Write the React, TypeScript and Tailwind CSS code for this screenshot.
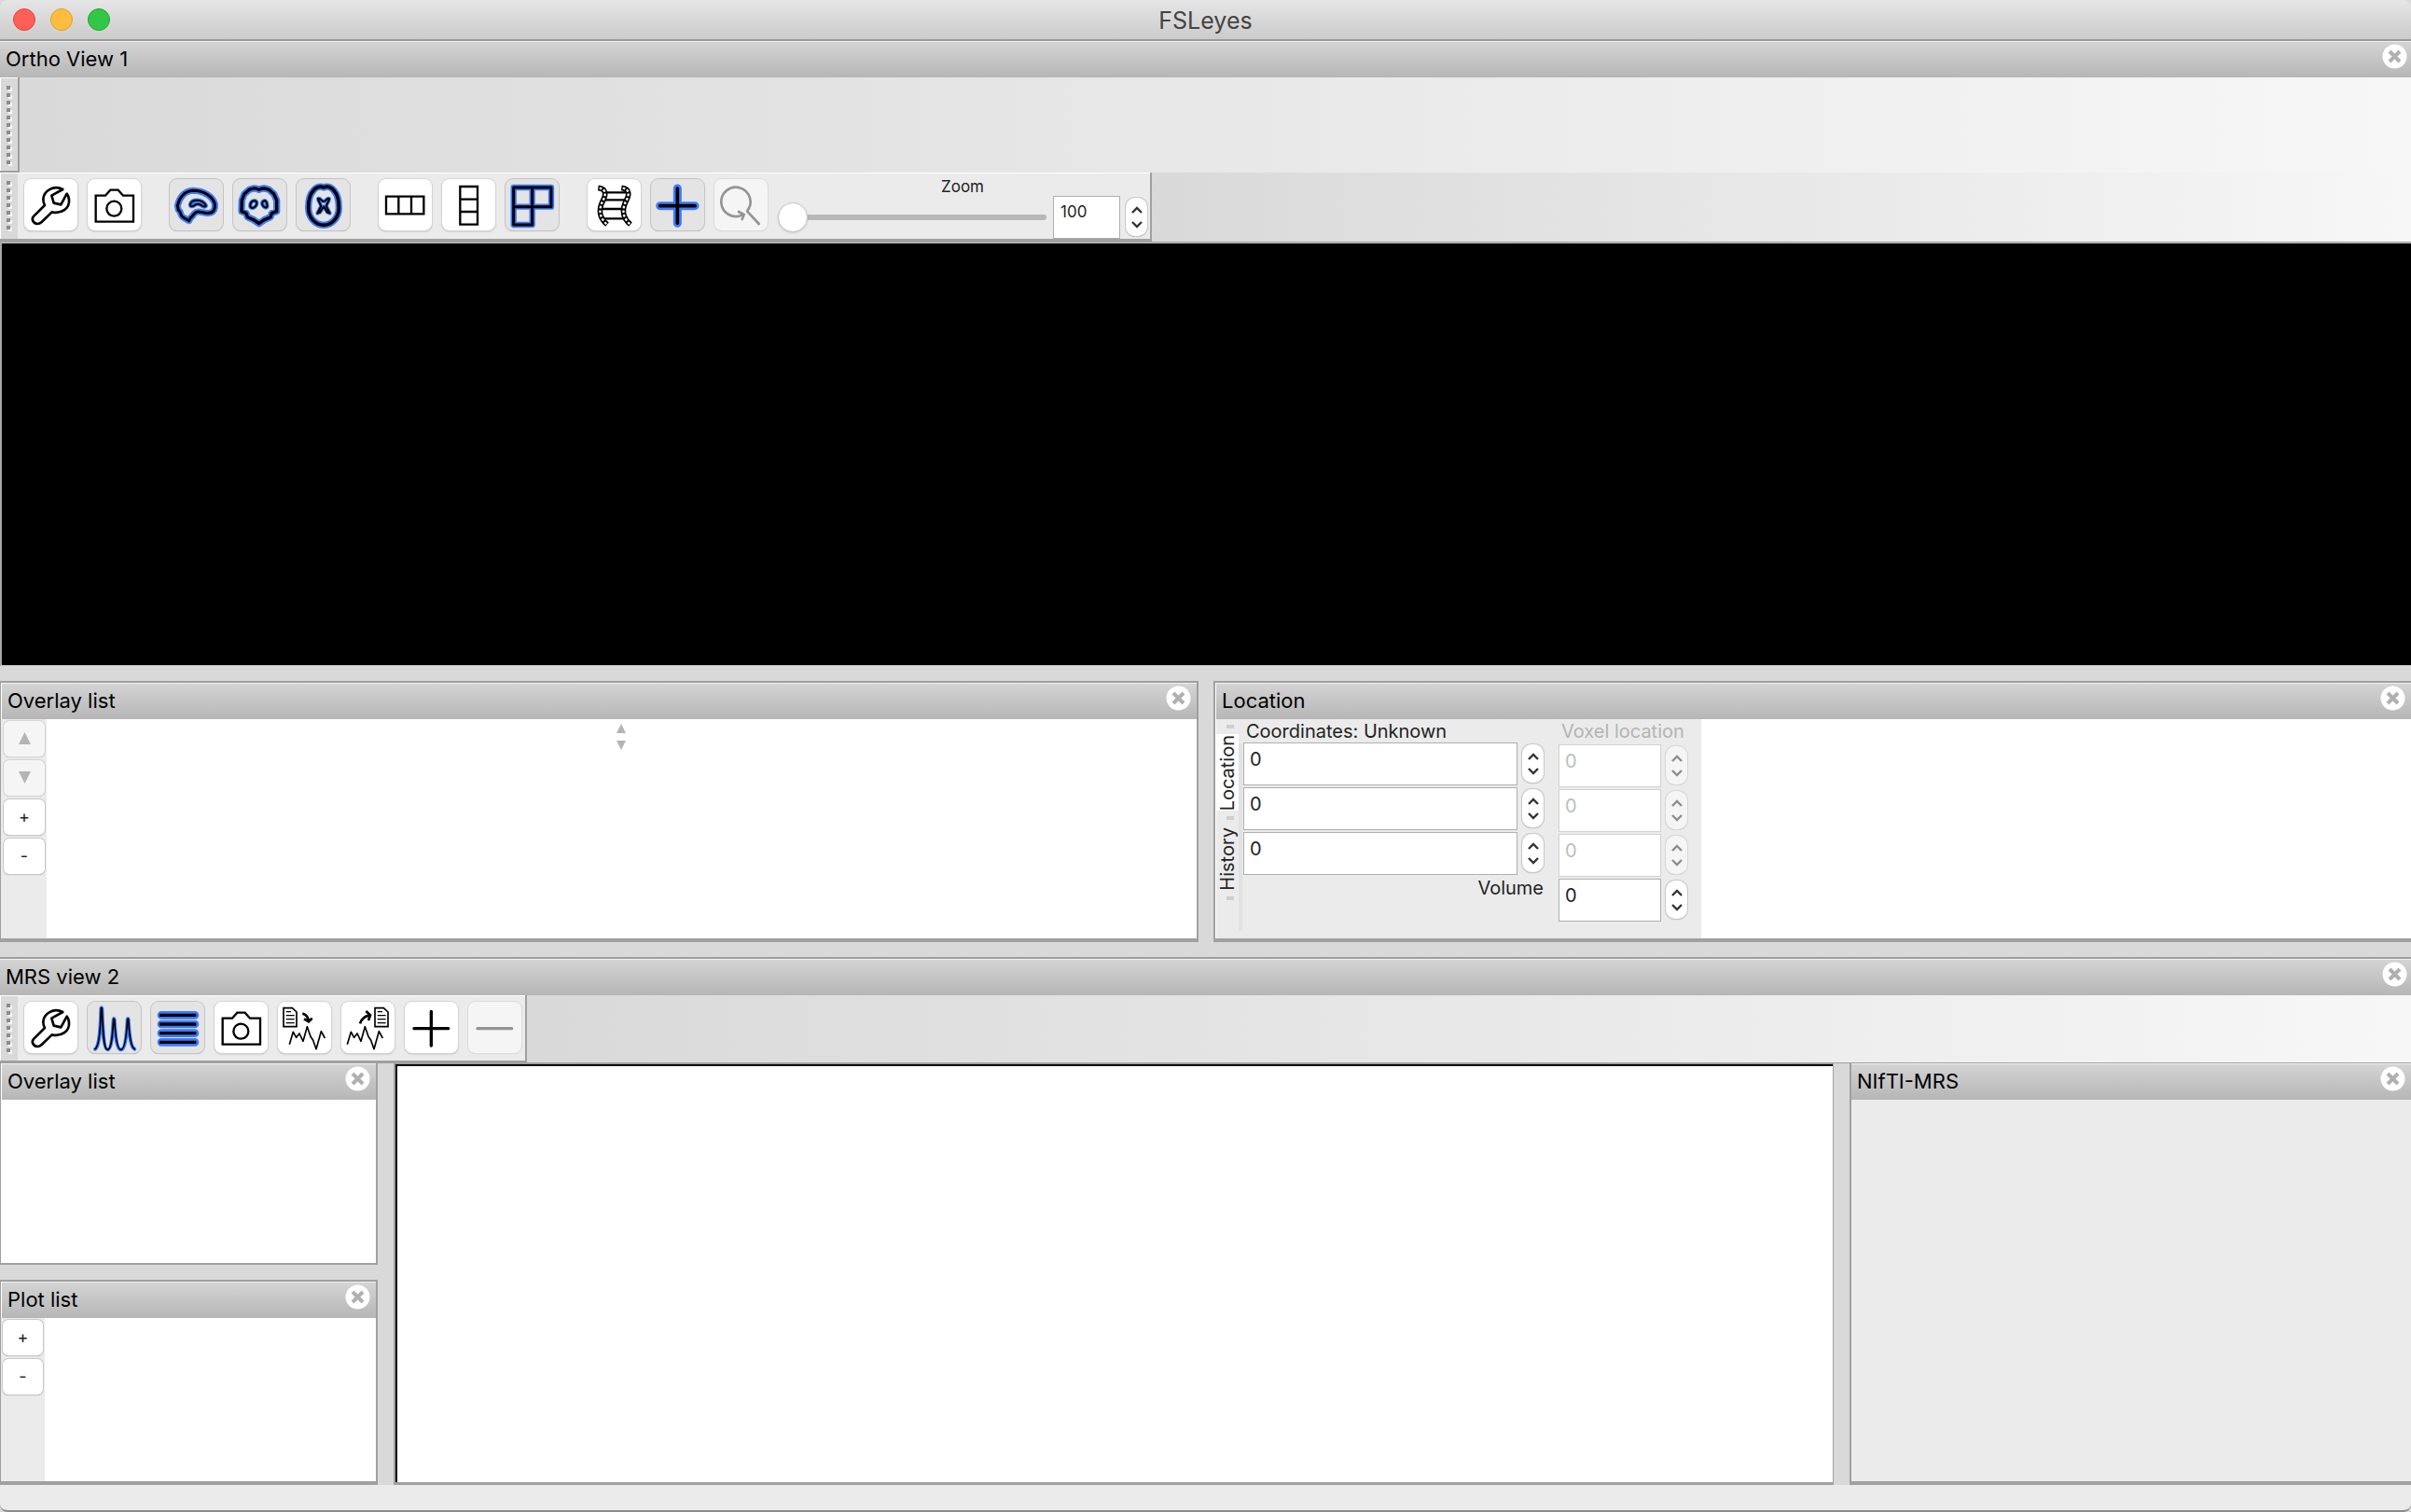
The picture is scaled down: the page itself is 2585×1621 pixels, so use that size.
import React from 'react';

/* ---------- glyphs for the tool buttons (drawn on a 171 x 165 grid) ---------- */

const BLUE = '#3d7bfb';

type Drawn = { children: React.ReactNode };

function Glyph({ children }: Drawn) {
  return (
    <svg viewBox="0 0 171 165" className="size-full" fill="none" aria-hidden="true">
      {children}
    </svg>
  );
}

function Glow({ d, outer = 18, inner = 9, fill = 'none' }: { d: string; outer?: number; inner?: number; fill?: string }) {
  return (
    <>
      <path d={d} stroke={BLUE} strokeWidth={outer} strokeLinecap="round" strokeLinejoin="round" fill={fill} />
      <path d={d} stroke="#000" strokeWidth={inner} strokeLinecap="round" strokeLinejoin="round" />
    </>
  );
}

const Wrench = () => (
  <Glyph>
    <path
      d="M124 33 C94 18 62 38 61 65 C61 73 63 79 66 84 L31 119 C21 129 29 143 42 144 C48 144 52 142 56 138 L89 106 C119 113 147 95 144 66 C143 57 141 52 137 47 L118 82 L95 77 L88 53 Z"
      stroke="#000"
      strokeWidth="8"
      strokeLinejoin="round"
    />
  </Glyph>
);

const Camera = () => (
  <Glyph>
    <path d="M26 53 H57 L73 35 H98 L114 53 H147 V137 H26 Z" stroke="#000" strokeWidth="7" />
    <circle cx="85" cy="95" r="24" stroke="#000" strokeWidth="7" />
  </Glyph>
);

const Sagittal = () => (
  <Glyph>
    <Glow
      outer={21}
      d="M25 86 C29 64 45 38 75 37 C110 38 138 55 145 80 C147 98 140 108 127 109 C110 112 98 101 86 106 C76 110 75 120 67 124 L62 134 L42 122 C32 116 38 106 28 100 Z"
    />
    <Glow
      outer={13}
      inner={6}
      fill={BLUE}
      d="M66 81 C71 64 103 63 116 84 C118 89 111 90 106 87 C96 79 85 79 77 86 C69 89 65 87 66 81 Z"
    />
  </Glyph>
);

const Coronal = () => (
  <Glyph>
    <Glow
      outer={22}
      inner={10}
      d="M83 34 C70 26 62 30 52 34 L36 48 L28 68 L27 104 L42 110 L46 122 L66 131 L83 143 L100 131 L120 122 L124 110 L140 104 L140 68 L131 48 L115 34 C105 30 96 26 83 34 Z"
    />
    <Glow outer={13} inner={6} d="M66 70 C54 72 52 90 59 92 C67 96 77 84 76 76 C75 71 71 69 66 70 Z" />
    <Glow outer={13} inner={6} d="M100 70 C92 72 91 82 98 88 C106 94 111 92 109 82 C108 74 105 69 100 70 Z" />
  </Glyph>
);

const Axial = () => (
  <Glyph>
    <Glow
      outer={22}
      inner={11}
      d="M87 27 C74 20 60 28 53 38 C40 52 38 74 38 92 C38 122 58 147 87 148 C116 147 136 122 136 92 C136 74 134 52 121 38 C114 28 100 20 87 27 Z"
    />
    <Glow
      outer={12}
      inner={6}
      d="M69 63 C77 60 80 72 87 72 C94 72 97 60 105 63 C104 74 95 80 96 88 L107 110 L99 107 L87 88 L75 107 L67 110 L78 88 C79 80 70 74 69 63 Z"
    />
  </Glyph>
);

const RowLayout = () => (
  <Glyph>
    <path d="M24 56 H145 V112 H24 Z M64 56 V112 M105 56 V112" stroke="#000" strokeWidth="7" />
  </Glyph>
);

const ColumnLayout = () => (
  <Glyph>
    <path d="M58 24 H114 V146 H58 Z M58 65 H114 M58 105 H114" stroke="#000" strokeWidth="7" />
  </Glyph>
);

const GridLayout = () => (
  <Glyph>
    <Glow outer={19} inner={9} d="M26 27 H147 V89 H86 V147 H26 Z M86 27 V89 M26 89 H86" />
  </Glyph>
);

const FILM = ['M34 28 C64 32 58 54 48 72 C36 96 36 124 63 146', 'M109 28 C139 32 133 54 123 72 C111 96 111 124 138 146'];

const Film = () => (
  <Glyph>
    <path d="M54 43 H130 M52 67 H126 M42 96 H116 M46 127 H120" stroke="#000" strokeWidth="7" />
    {FILM.map((d) => (
      <g key={d}>
        <path d={d} stroke="#000" strokeWidth="17" />
        <path d={d} stroke="#fff" strokeWidth="7" strokeDasharray="8 6" strokeDashoffset="-18" />
      </g>
    ))}
  </Glyph>
);

const Cross = () => (
  <Glyph>
    <path d="M85 30 V142 M29 86 H141" stroke={BLUE} strokeWidth="27" strokeLinecap="round" />
    <path d="M85 30 V142 M29 86 H141" stroke="#000" strokeWidth="11" strokeLinecap="round" />
  </Glyph>
);

const ResetZoom = () => (
  <Glyph>
    <path
      d="M105 103 A47 47 0 1 0 90 115 M105 103 L143 144 M78 105 L95 114 L89 129"
      stroke="#949494"
      strokeWidth="8"
      strokeLinecap="round"
    />
  </Glyph>
);

const Spectrum = () => (
  <Glyph>
    <Glow
      outer={12}
      inner={5}
      d="M24 152 C36 145 41 100 43 22 Q44 16 46 22 C49 100 52 154 64 154 C76 154 80 110 83 57 Q84 51 86 57 C89 110 94 154 107 154 C120 154 125 110 128 57 Q130 51 131 57 C134 110 139 147 151 152"
    />
  </Glyph>
);

const Bars = () => (
  <Glyph>
    <path d="M33 43 H141 M33 72 H141 M33 101 H141 M33 130 H141" stroke={BLUE} strokeWidth="26" strokeLinecap="round" />
    <path d="M27 43 H145 M27 72 H145 M27 101 H145 M27 130 H145" stroke="#000" strokeWidth="10" />
  </Glyph>
);

const Sheet = ({ x }: { x: number }) => (
  <g transform={`translate(${x} 0)`} stroke="#000">
    <path d="M18 20 H46 L60 33 V80 H18 Z" strokeWidth="5" />
    <path d="M26 32 H42 M26 44 H53 M26 56 H53 M26 68 H53" strokeWidth="4" />
  </g>
);

const Trace = ({ x }: { x: number }) => (
  <path
    transform={`translate(${x} 0)`}
    d="M37 137 L49 97 L59 115 L69 102 L81 127 L94 80 L105 112 L113 124 L123 152 L139 95 L151 117"
    stroke="#000"
    strokeWidth="5"
    strokeLinejoin="round"
  />
);

const ImportTrace = () => (
  <Glyph>
    <Sheet x={0} />
    <path d="M79 38 Q96 42 99 63 M84 55 L99 64 L110 53" stroke="#000" strokeWidth="8" />
    <Trace x={0} />
  </Glyph>
);

const ExportTrace = () => (
  <Glyph>
    <Sheet x={90} />
    <path d="M60 70 Q66 48 92 43 M79 30 L93 43 L87 60" stroke="#000" strokeWidth="8" />
    <Trace x={-18} />
  </Glyph>
);

const Plus = () => (
  <Glyph>
    <path d="M85 31 V141 M30 86 H140" stroke="#000" strokeWidth="10" strokeLinecap="round" />
  </Glyph>
);

const Minus = () => (
  <Glyph>
    <path d="M30 86 H140" stroke="#949494" strokeWidth="10" strokeLinecap="round" />
  </Glyph>
);

/* ---------- controls ---------- */

type ToolProps = { label: string; icon: React.ReactNode; pressed?: boolean; disabled?: boolean };

function Tool({ label, icon, pressed, disabled }: ToolProps) {
  const look = pressed
    ? 'bg-[#e4e4e4] shadow-[0_0_0_1px_#c4c4c4,0_1px_1px_0_#a8a8a8]'
    : disabled
      ? 'bg-[#f5f5f5] shadow-[0_0_0_1px_#dcdcdc,0_1px_1px_0_#cccccc]'
      : 'bg-white shadow-[0_0_0_1px_#d4d4d4,0_1px_2px_0_#a0a0a0]';
  return (
    <button type="button" aria-label={label} aria-pressed={pressed} disabled={disabled} className={`h-[55px] w-[57px] shrink-0 rounded-lg ${look}`}>
      {icon}
    </button>
  );
}

function SmallButton({ label, children, disabled }: { label: string; children: React.ReactNode; disabled?: boolean }) {
  return (
    <button
      type="button"
      aria-label={label}
      disabled={disabled}
      className={
        disabled
          ? 'flex h-[38px] w-full items-center justify-center rounded-md bg-[#f5f5f5] pb-px text-[#b4b4b4] shadow-[0_0_0_1px_#d4d4d4,0_1px_1px_0_#c4c4c4]'
          : 'flex h-[38px] w-full items-center justify-center rounded-md bg-white text-lg text-[#222] shadow-[0_0_0_1px_#c8c8c8,0_1px_1px_0_#989898]'
      }
    >
      {children}
    </button>
  );
}

const Up = ({ className }: { className: string }) => (
  <svg viewBox="0 0 14 14" className={className} fill="currentColor" aria-hidden="true">
    <path d="M7 0 L14 14 H0 Z" />
  </svg>
);

const Down = ({ className }: { className: string }) => (
  <svg viewBox="0 0 14 14" className={className} fill="currentColor" aria-hidden="true">
    <path d="M0 0 H14 L7 14 Z" />
  </svg>
);

function Close({ label }: { label: string }) {
  return (
    <button type="button" aria-label={`Close ${label}`} className="size-[27px]">
      <svg viewBox="0 0 27 27" className="size-full" aria-hidden="true">
        <circle cx="13.5" cy="13.5" r="13" fill="#fff" />
        <path d="M8 8 L19 19 M19 8 L8 19" stroke="#b0b0b0" strokeWidth="4" />
      </svg>
    </button>
  );
}

function Caption({ title, inner }: { title: string; inner?: boolean }) {
  return (
    <div
      className={`flex h-[39px] shrink-0 items-start justify-between border-t border-[#efefef] bg-linear-to-b from-[#d4d4d4] to-[#b6b6b6] pt-[2px] ${
        inner ? 'pr-[6px] pl-[6px]' : 'pr-1 pl-[6px]'
      }`}
    >
      <h2 className="text-[22px] leading-[32px] text-black">{title}</h2>
      <Close label={title} />
    </div>
  );
}

function Gripper({ dots }: { dots: number }) {
  return (
    <div className="flex w-[19px] shrink-0 flex-col gap-1 border-t border-l border-white bg-[#d9d9d9] pt-2 pl-[6px]">
      {Array.from({ length: dots }, (_, i) => (
        <span key={i} className="size-1 bg-[#8c8c8c] shadow-[2px_2px_0_#f6f6f6]" />
      ))}
    </div>
  );
}

function Spinner({ label, disabled }: { label: string; disabled?: boolean }) {
  return (
    <div
      className={
        disabled
          ? 'flex h-[41px] w-[23px] shrink-0 flex-col rounded-[10px] bg-[#f5f5f5] text-[#8e8e8e] shadow-[0_0_0_1px_#d8d8d8,0_1px_1px_0_#c4c4c4]'
          : 'flex h-[41px] w-[23px] shrink-0 flex-col rounded-[10px] bg-white text-[#333] shadow-[0_0_0_1px_#c8c8c8,0_1px_1px_0_#989898]'
      }
    >
      <button type="button" aria-label={`Increase ${label}`} disabled={disabled} className="flex flex-1 items-end justify-center pb-1">
        <svg viewBox="0 0 12 8" className="h-2 w-3" fill="none" stroke="currentColor" strokeWidth="2.4" aria-hidden="true">
          <path d="M1 7 L6 2 L11 7" />
        </svg>
      </button>
      <button type="button" aria-label={`Decrease ${label}`} disabled={disabled} className="flex flex-1 items-start justify-center pt-1">
        <svg viewBox="0 0 12 8" className="h-2 w-3" fill="none" stroke="currentColor" strokeWidth="2.4" aria-hidden="true">
          <path d="M1 1 L6 6 L11 1" />
        </svg>
      </button>
    </div>
  );
}

function Field({ label, wide, disabled }: { label: string; wide?: boolean; disabled?: boolean }) {
  return (
    <div className="flex items-start gap-[5px] pb-[2px]">
      <input
        type="text"
        aria-label={label}
        defaultValue="0"
        disabled={disabled}
        className={`h-[46px] border bg-white pb-[10px] pl-[6px] text-xl ${wide ? 'w-[294px]' : 'w-[110px]'} ${
          disabled ? 'border-[#d2d2d2] text-[#bdbdbd]' : 'border-[#b0b0b0] text-[#222]'
        }`}
      />
      <div className="pt-[2px]">
        <Spinner label={label} disabled={disabled} />
      </div>
    </div>
  );
}

const Tick = () => <span className="ml-[11px] h-1 w-2 bg-[#cfcfcf]" />;

/* ---------- panels ---------- */

function Toolbar({ dots, short, children }: { dots: number; short?: boolean; children: React.ReactNode }) {
  return (
    <div className={`flex shrink-0 ${short ? 'h-[73px]' : 'h-[75px]'}`}>
      <div className={`flex border-r-2 border-[#a0a0a0] bg-[#ebebeb] ${short ? 'border-b-3' : 'border-b-4'}`}>
        <Gripper dots={dots} />
        <div className="flex gap-[11px] border-t border-white pt-[6px] pl-[7px]">{children}</div>
      </div>
      <div className="flex-1 border-b border-[#a0a0a0] bg-linear-to-r from-[#d9d9d9] to-[#f7f7f7]" />
    </div>
  );
}

function LocationPanel() {
  return (
    <section className="flex min-w-0 flex-1 flex-col border-t-2 border-b-4 border-l-2 border-[#a0a0a0] bg-white">
      <div className="ml-px flex flex-1 flex-col">
        <Caption title="Location" inner />
        <div className="flex w-[520px] flex-1 bg-[#ebebeb]">
          <div role="tablist" aria-orientation="vertical" className="flex w-6 shrink-0 flex-col pt-[6px]">
            <Tick />
            <button
              type="button"
              role="tab"
              aria-selected="true"
              className="mt-[6px] flex h-[82px] w-6 items-center justify-center bg-white text-[#222]"
            >
              <span className="rotate-180 text-xl leading-6 [writing-mode:vertical-rl]">Location</span>
            </button>
            <span className="h-[6px]" />
            <Tick />
            <button type="button" role="tab" aria-selected="false" className="flex h-[82px] w-6 items-center justify-center text-[#222]">
              <span className="rotate-180 text-xl leading-6 [writing-mode:vertical-rl]">History</span>
            </button>
            <Tick />
          </div>
          <div className="mt-[26px] mb-2 w-1 shrink-0 bg-[#e2e2e2]" />
          <div className="ml-px">
            <h3 className="h-[25px] pl-[3px] text-xl leading-[26px] text-[#222]">Coordinates: Unknown</h3>
            <Field wide label="World X" />
            <Field wide label="World Y" />
            <Field wide label="World Z" />
            <p className="text-right text-xl leading-[24px] text-[#222]">Volume</p>
          </div>
          <div className="ml-4">
            <h3 className="h-[27px] pl-[3px] text-xl leading-[26px] text-[#b4b4b4]">Voxel location</h3>
            <Field label="Voxel X" disabled />
            <Field label="Voxel Y" disabled />
            <Field label="Voxel Z" disabled />
            <Field label="Volume" />
          </div>
        </div>
      </div>
    </section>
  );
}

export default function App() {
  return (
    <div className="flex min-h-screen flex-col bg-[#d9d9d9] font-['Inter','Liberation_Sans',sans-serif]">
      <header className="grid h-[44px] shrink-0 grid-cols-[1fr_auto_1fr] items-center rounded-t-lg border-b-2 border-[#9a9a9a] bg-linear-to-b from-[#e6e6e6] to-[#cbcbcb]">
        <div className="flex gap-4 pl-[14px]">
          <button type="button" aria-label="Close window" className="size-6 rounded-full border border-[#e0443e] bg-[#ff5f57]" />
          <button type="button" aria-label="Minimise window" className="size-6 rounded-full border border-[#dea123] bg-[#febc40]" />
          <button type="button" aria-label="Zoom window" className="size-6 rounded-full border border-[#1aab29] bg-[#33c748]" />
        </div>
        <h1 className="pt-[2px] text-[25px] leading-8 text-[#444]">FSLeyes</h1>
      </header>

      <Caption title="Ortho View 1" />
      <div className="flex h-[102px] shrink-0 bg-linear-to-r from-[#d9d9d9] to-[#f7f7f7]">
        <div className="flex border-r-2 border-b-2 border-[#a0a0a0]">
          <Gripper dots={11} />
        </div>
      </div>
      <Toolbar dots={7}>
        <Tool label="View settings" icon={<Wrench />} />
        <Tool label="Screenshot" icon={<Camera />} />
        <span className="w-[9px]" />
        <Tool label="Sagittal view" icon={<Sagittal />} pressed />
        <Tool label="Coronal view" icon={<Coronal />} pressed />
        <Tool label="Axial view" icon={<Axial />} pressed />
        <span className="w-[9px]" />
        <Tool label="Horizontal layout" icon={<RowLayout />} />
        <Tool label="Vertical layout" icon={<ColumnLayout />} />
        <Tool label="Grid layout" icon={<GridLayout />} pressed />
        <span className="w-[9px]" />
        <Tool label="Movie mode" icon={<Film />} />
        <Tool label="Show cursor" icon={<Cross />} pressed />
        <Tool label="Reset zoom" icon={<ResetZoom />} disabled />
        <div className="flex flex-col pr-[3px]">
          <label htmlFor="zoom" className="text-center text-[17px] leading-4 text-[#222]">
            Zoom
          </label>
          <div className="flex items-start pt-[2px]">
            <input
              id="zoom"
              type="range"
              min="100"
              max="5000"
              defaultValue="100"
              className="mt-[7px] h-8 w-[288px] appearance-none bg-transparent [&::-webkit-slider-runnable-track]:h-[6px] [&::-webkit-slider-runnable-track]:rounded-full [&::-webkit-slider-runnable-track]:bg-[#b8b8b8] [&::-webkit-slider-thumb]:-mt-[13px] [&::-webkit-slider-thumb]:size-8 [&::-webkit-slider-thumb]:appearance-none [&::-webkit-slider-thumb]:rounded-full [&::-webkit-slider-thumb]:border [&::-webkit-slider-thumb]:border-[#c8c8c8] [&::-webkit-slider-thumb]:bg-white [&::-webkit-slider-thumb]:shadow-sm"
            />
            <input
              type="text"
              aria-label="Zoom value"
              defaultValue="100"
              className="ml-[7px] h-[46px] w-[72px] border border-[#b0b0b0] bg-white pb-3 pl-[7px] text-[17px] text-[#222]"
            />
            <div className="pt-[2px] pl-[6px]">
              <Spinner label="zoom" />
            </div>
          </div>
        </div>
      </Toolbar>
      <main className="flex-[454_1_0px] border-t border-b border-l-2 border-[#c4c4c4] border-l-[#a8a8a8] bg-black" aria-label="Ortho canvas" />

      <div className="flex flex-[280_1_0px] gap-4 pt-4">
        <section className="flex min-w-0 flex-1 flex-col border-t-2 border-r-2 border-b-4 border-l border-[#a0a0a0] bg-white">
          <div className="ml-px">
            <Caption title="Overlay list" inner />
          </div>
          <div className="flex flex-1">
            <div className="flex w-[49px] shrink-0 flex-col gap-1 bg-[#ebebeb] pt-[2px] pr-[2px] pl-[3px]">
              <SmallButton label="Move up" disabled>
                <Up className="size-[13px]" />
              </SmallButton>
              <SmallButton label="Move down" disabled>
                <Down className="size-[13px]" />
              </SmallButton>
              <SmallButton label="Add overlay">+</SmallButton>
              <SmallButton label="Remove overlay">-</SmallButton>
            </div>
            <div className="flex flex-1 flex-col items-center gap-2 pt-[5px] pr-[2px] text-[#b4b4b4]">
              <Up className="h-[10px] w-3" />
              <Down className="h-[10px] w-3" />
            </div>
          </div>
        </section>
        <LocationPanel />
      </div>

      <div className="mt-4 border-t-2 border-[#a0a0a0]">
        <Caption title="MRS view 2" />
      </div>
      <Toolbar dots={7} short>
        <Tool label="Plot settings" icon={<Wrench />} />
        <Tool label="Plot list" icon={<Spectrum />} pressed />
        <Tool label="Overlay list" icon={<Bars />} pressed />
        <Tool label="Plot screenshot" icon={<Camera />} />
        <Tool label="Import data" icon={<ImportTrace />} />
        <Tool label="Export data" icon={<ExportTrace />} />
        <Tool label="Hold series" icon={<Plus />} />
        <div className="pr-1">
          <Tool label="Remove series" icon={<Minus />} disabled />
        </div>
      </Toolbar>

      <div className="flex flex-[454_1_0px] gap-[17px]">
        <div className="flex w-[405px] shrink-0 flex-col gap-4">
          <section className="flex flex-[218_1_0px] flex-col border-r-2 border-b-2 border-l border-[#a0a0a0] bg-white">
            <div className="ml-px">
              <Caption title="Overlay list" inner />
            </div>
          </section>
          <section className="flex flex-[218_1_0px] flex-col border-t-2 border-r-2 border-b-4 border-l border-[#a0a0a0] bg-white">
            <div className="ml-px">
              <Caption title="Plot list" inner />
            </div>
            <div className="flex flex-1">
              <div className="flex w-[47px] shrink-0 flex-col gap-1 bg-[#ebebeb] px-[2px] pt-[2px]">
                <SmallButton label="Add series">+</SmallButton>
                <SmallButton label="Remove series">-</SmallButton>
              </div>
            </div>
          </section>
        </div>
        <section className="flex min-w-0 flex-1 border-t border-r border-b-3 border-l-2 border-[#a0a0a0]" aria-label="Plot canvas">
          <div className="flex-1 border-t-2 border-l-2 border-black bg-white" />
        </section>
        <section className="flex w-[602px] shrink-0 flex-col border-b-4 border-l-2 border-[#a0a0a0] bg-[#ebebeb]">
          <Caption title="NIfTI-MRS" inner />
        </section>
      </div>

      <footer className="h-[29px] shrink-0 rounded-b-lg border-b-2 border-[#8c8c8c] bg-[#ebebeb]" />
    </div>
  );
}
